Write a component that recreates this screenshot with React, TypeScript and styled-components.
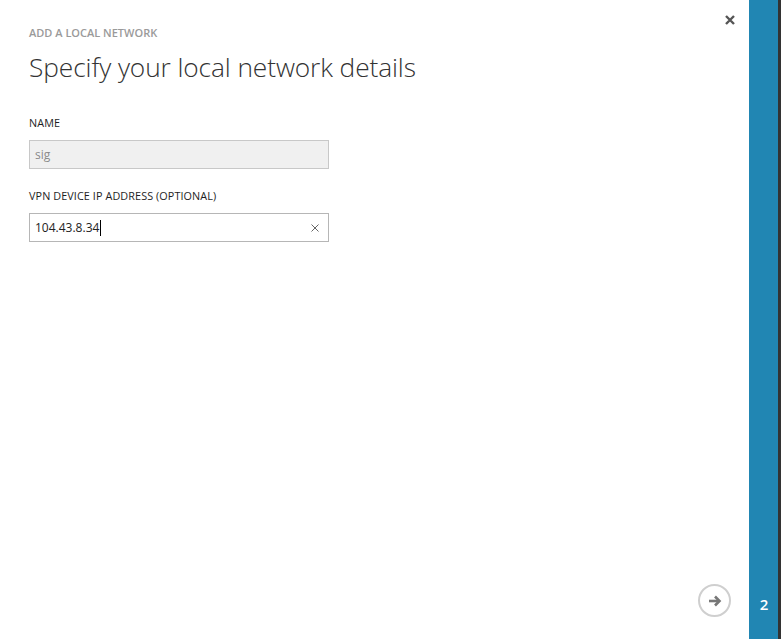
import React from "react";
import styled, { createGlobalStyle } from "styled-components";

const Global = createGlobalStyle`
  html, body { margin: 0; padding: 0; height: 100%; }
  body { font-family: "Segoe UI", "Open Sans", "Noto Sans", sans-serif; background: #fff; }
  #root { height: 100%; }
`;

const Page = styled.div`
  display: flex;
  width: 781px;
  height: 639px;
  overflow: hidden;
`;

const Main = styled.div`
  position: relative;
  flex: 1;
  display: flex;
  flex-direction: column;
  padding: 25px 0 0 29px;
  box-sizing: border-box;
`;

const Kicker = styled.div`
  font-size: 11px;
  font-weight: 600;
  color: #9a9a9a;
  line-height: 16px;
`;

const Title = styled.h1`
  margin: 8px 0 0 0;
  font-size: 26.3px;
  font-weight: 300;
  color: #333;
  line-height: 36px;
  letter-spacing: -0.1px;
`;

const Label = styled.div<{ $top: number }>`
  font-size: 10.8px;
  font-weight: 500;
  color: #1e1e1e;
  line-height: 14px;
  letter-spacing: 0.1px;
  margin-top: ${(p) => p.$top}px;
`;

const Field = styled.div<{ $disabled?: boolean }>`
  margin-top: 10px;
  width: 300px;
  height: 29px;
  box-sizing: border-box;
  border: 1px solid ${(p) => (p.$disabled ? "#c8c8c8" : "#b6b6b6")};
  background: ${(p) => (p.$disabled ? "#f0f0f0" : "#fff")};
  display: flex;
  align-items: center;
  padding: 0 9px 0 5px;
  font-size: 12px;
  color: ${(p) => (p.$disabled ? "#8a8a8a" : "#222")};
`;

const Value = styled.span`
  flex: 1;
  display: flex;
  align-items: center;
`;

const Caret = styled.span`
  display: inline-block;
  width: 1px;
  height: 16px;
  background: #000;
  margin-left: 1px;
`;

const ClearX = styled.span`
  display: flex;
  align-items: center;
`;

const CloseBtn = styled.div`
  position: absolute;
  top: 14px;
  right: 13px;
  width: 12px;
  height: 12px;
  display: flex;
  align-items: center;
  justify-content: center;
`;

const NextBtn = styled.div`
  position: absolute;
  right: 18px;
  bottom: 22px;
  width: 33px;
  height: 33px;
  box-sizing: border-box;
  border: 2px solid #cfcfcf;
  border-radius: 50%;
  display: flex;
  align-items: center;
  justify-content: center;
`;

const Side = styled.div`
  width: 29px;
  background: #2186b3;
  border-right: 3px solid #333;
  display: flex;
  flex-direction: column;
  justify-content: flex-end;
  align-items: center;
  padding-bottom: 25px;
  box-sizing: content-box;
`;

const StepNum = styled.div`
  color: #fff;
  font-size: 15px;
  font-weight: 600;
  line-height: 20px;
  margin-left: 1px;
`;

export default function App() {
  return (
    <>
      <Global />
      <Page>
        <Main>
          <Kicker>ADD A LOCAL NETWORK</Kicker>
          <Title>Specify your local network details</Title>
          <Label $top={31}>NAME</Label>
          <Field $disabled>
            <Value>sig</Value>
          </Field>
          <Label $top={20}>VPN DEVICE IP ADDRESS (OPTIONAL)</Label>
          <Field>
            <Value>
              104.43.8.34
              <Caret />
            </Value>
            <ClearX>
              <svg width="8" height="8" viewBox="0 0 8 8">
                <path d="M0.5 0.5L7.5 7.5M7.5 0.5L0.5 7.5" stroke="#666" strokeWidth="1" />
              </svg>
            </ClearX>
          </Field>
          <CloseBtn>
            <svg width="10" height="10" viewBox="0 0 10 10">
              <path d="M1 1L9 9M9 1L1 9" stroke="#555" strokeWidth="2.4" />
            </svg>
          </CloseBtn>
          <NextBtn>
            <svg width="14" height="12" viewBox="0 0 14 12">
              <path d="M1 6H11" stroke="#777" strokeWidth="2.6" />
              <path d="M7 1.5L11.5 6L7 10.5" stroke="#777" strokeWidth="2.6" fill="none" />
            </svg>
          </NextBtn>
        </Main>
        <Side>
          <StepNum>2</StepNum>
        </Side>
      </Page>
    </>
  );
}
